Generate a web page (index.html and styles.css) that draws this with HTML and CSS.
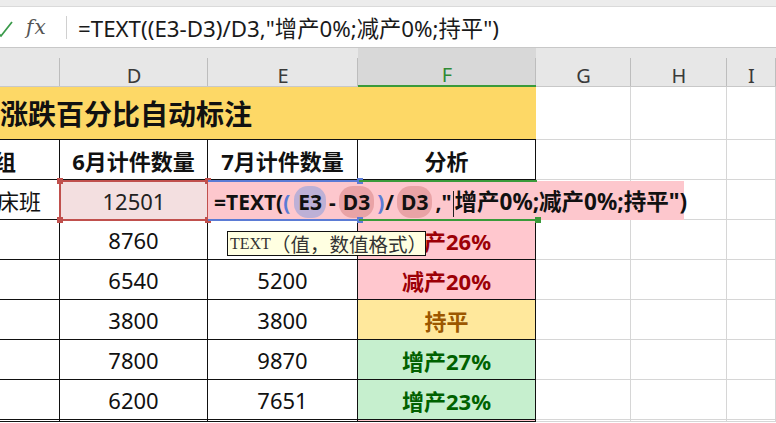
FILE: index.html
```html
<!DOCTYPE html>
<html lang="zh-CN">
<head>
  <meta charset="utf-8">
  <title>涨跌百分比自动标注</title>
  <link rel="stylesheet" href="styles.css">
</head>
<body>
  <div class="top-strip"></div>

  <div class="formula-bar">
    <div class="fb-icons">
      <svg class="check" width="14" height="20" viewBox="0 0 14 20">
        <path d="M-2 15 L1 18 L12 4" fill="none" stroke="#3a9a4a" stroke-width="1.8"/>
      </svg>
      <span class="fx">fx</span>
    </div>
    <div class="fb-text">=TEXT((E3-D3)/D3,"增产0%;减产0%;持平")</div>
  </div>

  <div class="sheet">
    <!-- column headers -->
    <div class="col-head"></div>
    <div class="col-head">D</div>
    <div class="col-head">E</div>
    <div class="col-head active">F</div>
    <div class="col-head">G</div>
    <div class="col-head">H</div>
    <div class="col-head">I</div>

    <!-- title row -->
    <div class="cell title">涨跌百分比自动标注</div>
    <div class="cell grid"></div>
    <div class="cell grid"></div>
    <div class="cell grid"></div>

    <!-- header row -->
    <div class="cell data side head-side bold">班组</div>
    <div class="cell data bold">6月计件数量</div>
    <div class="cell data bold">7月计件数量</div>
    <div class="cell data bold">分析</div>
    <div class="cell grid"></div>
    <div class="cell grid"></div>
    <div class="cell grid"></div>

    <div class="cell data side">车床班</div>
    <div class="cell data">12501</div>
    <div class="cell data"></div>
    <div class="cell data"></div>
    <div class="cell grid"></div>
    <div class="cell grid"></div>
    <div class="cell grid"></div>

    <div class="cell data side"></div>
    <div class="cell data">8760</div>
    <div class="cell data"></div>
    <div class="cell data bold up-red">增产26%</div>
    <div class="cell grid"></div>
    <div class="cell grid"></div>
    <div class="cell grid"></div>

    <div class="cell data side"></div>
    <div class="cell data">6540</div>
    <div class="cell data">5200</div>
    <div class="cell data bold up-red">减产20%</div>
    <div class="cell grid"></div>
    <div class="cell grid"></div>
    <div class="cell grid"></div>

    <div class="cell data side"></div>
    <div class="cell data">3800</div>
    <div class="cell data">3800</div>
    <div class="cell data bold flat">持平</div>
    <div class="cell grid"></div>
    <div class="cell grid"></div>
    <div class="cell grid"></div>

    <div class="cell data side"></div>
    <div class="cell data">7800</div>
    <div class="cell data">9870</div>
    <div class="cell data bold up-green">增产27%</div>
    <div class="cell grid"></div>
    <div class="cell grid"></div>
    <div class="cell grid"></div>

    <div class="cell data side"></div>
    <div class="cell data">6200</div>
    <div class="cell data">7651</div>
    <div class="cell data bold up-green">增产23%</div>
    <div class="cell grid"></div>
    <div class="cell grid"></div>
    <div class="cell grid"></div>

    <div class="cell data side"></div>
    <div class="cell data"></div>
    <div class="cell data"></div>
    <div class="cell data up-red"></div>
    <div class="cell grid"></div>
    <div class="cell grid"></div>
    <div class="cell grid"></div>

    <!-- reference highlights and the in-cell editor -->
    <div class="ref-d3">12501
      <i class="knob tl"></i><i class="knob tr"></i><i class="knob bl"></i><i class="knob br"></i>
    </div>
    <div class="editor">
      <span class="editor-line">=TEXT(<span class="paren">(</span><span class="pill pill-e">E3</span>-<span class="pill pill-d">D3</span><span class="paren">)</span>/<span class="pill pill-d">D3</span>,"<span class="caret"></span><span class="editor-tail">增产0%;减产0%;持平")</span></span>
    </div>
    <div class="ref-e"><i class="knob-b tr"></i><i class="knob-b br"></i></div>
    <div class="ref-f"><i class="knob-g br"></i></div>

    <div class="tip"><span class="tip-fn">TEXT</span>（值，数值格式）</div>
  </div>
</body>
</html>
```

FILE: styles.css
```css
body {
  margin: 0;
  width: 776px;
  height: 423px;
  overflow: hidden;
  background: white;
  font-family: "Noto Sans", "Noto Sans CJK SC", sans-serif;
  color: #111;
}

.top-strip {
  height: 6px;
  background: #ececec;
  border-bottom: 1px solid #dadada;
}

.formula-bar {
  display: flex;
  align-items: center;
  height: 40px;
  border-bottom: 1px solid #c8c8c8;
}

.fb-icons {
  display: flex;
  align-items: center;
  gap: 12px;
  width: 66px;
  height: 23px;
  border-right: 1px solid #d0d0d0;
}

.check {
  margin-top: 2px;
}

.fx {
  font-family: "DejaVu Serif", serif;
  font-style: italic;
  font-size: 20px;
  color: #555;
  letter-spacing: 1px;
}

.fb-text {
  padding-left: 11px;
  font-size: 22.3px;
  color: #1a1a1a;
  white-space: nowrap;
}

/* sheet grid */
.sheet {
  position: relative;
  display: grid;
  grid-template-columns: 60px 148px 150px 178px 95px 96px 1fr;
  grid-template-rows: 39px 53px repeat(7, 40px) 2px;
}

.col-head {
  display: flex;
  align-items: center;
  justify-content: center;
  padding-top: 16px;
  background: #e7e7e7;
  border-bottom: 1px solid #c8c8c8;
  font-size: 20px;
  color: #3a3a3a;
  position: relative;
}

.col-head::after {
  content: "";
  position: absolute;
  right: 0;
  top: 10px;
  bottom: 0;
  width: 1px;
  background: #bdbdbd;
}

.col-head.active {
  background: #d8d8d8;
  color: #2f8a34;
  border-bottom: 2px solid #3a9a3a;
}

.cell {
  box-sizing: border-box;
  display: flex;
  align-items: center;
  justify-content: center;
  overflow: hidden;
  white-space: nowrap;
  font-size: 22px;
  border-right: 1px solid #d6d6d6;
  border-bottom: 1px solid #d6d6d6;
}

.cell.data {
  border-right-color: #111;
  border-bottom-color: #111;
}

.cell.side {
  justify-content: flex-end;
  padding-right: 18px;
}

.cell.head-side {
  padding-right: 43px;
}

.bold {
  font-weight: bold;
}

.title {
  grid-column: span 4;
  justify-content: flex-start;
  background: #fdd866;
  font-size: 28px;
  font-weight: bold;
  border-right: none;
  border-bottom: 1px solid #111;
}

.up-red {
  background: #ffc7ce;
  color: #9c0006;
}

.flat {
  background: #ffe89c;
  color: #9c5700;
}

.up-green {
  background: #c6efce;
  color: #006100;
}

/* D3 reference range */
.ref-d3 {
  position: absolute;
  left: 59px;
  top: 132px;
  width: 150px;
  height: 41px;
  box-sizing: border-box;
  display: flex;
  align-items: center;
  justify-content: center;
  background: #f3dfe0;
  border: 2px solid #c0504d;
  font-size: 22px;
  color: #222;
}

.knob, .knob-b, .knob-g {
  position: absolute;
  width: 6px;
  height: 6px;
}

.knob { background: #c0504d; }
.knob-b { background: #5b7bd5; }
.knob-g { background: #3a9a3a; }

.tl { left: -4px; top: -4px; }
.tr { right: -4px; top: -4px; }
.bl { left: -4px; bottom: -4px; }
.br { right: -4px; bottom: -4px; }

/* in-cell formula editor */
.editor {
  position: absolute;
  left: 208px;
  top: 133px;
  width: 476px;
  height: 39px;
  box-sizing: border-box;
  display: flex;
  align-items: center;
  padding-left: 6px;
  background: #fdc7cd;
  font-size: 21px;
  font-weight: bold;
  color: #111;
}

.editor-line {
  white-space: nowrap;
}

.editor-tail {
  font-size: 22.5px;
}

.paren {
  color: #5b7bd5;
  margin-right: 1px;
}

.pill {
  padding: 2px 4px;
  margin: 0 3px;
  border-radius: 14px;
}

.pill-e { background: #bdb0d6; }
.pill-d { background: #e9a3a6; }

.caret {
  display: inline-block;
  width: 1px;
  height: 26px;
  background: #222;
  vertical-align: middle;
  margin: 0 1px;
}

.ref-e, .ref-f {
  position: absolute;
  top: 132px;
  height: 41px;
  box-sizing: border-box;
}

.ref-e {
  left: 208px;
  width: 151px;
  border-top: 2px solid #5b7bd5;
  border-bottom: 2px solid #5b7bd5;
}

.ref-f {
  left: 359px;
  width: 178px;
  border-top: 2px solid #3a9a3a;
  border-bottom: 2px solid #3a9a3a;
}

.tip {
  position: absolute;
  left: 227px;
  top: 183px;
  width: 199px;
  height: 25px;
  box-sizing: border-box;
  display: flex;
  align-items: center;
  padding-left: 2px;
  background: #ffffe1;
  border: 1px solid #111;
  font-family: "Liberation Serif", "Noto Sans CJK SC", serif;
  font-size: 19.5px;
  color: #333;
  white-space: nowrap;
}

.tip-fn {
  font-size: 16px;
}
```
